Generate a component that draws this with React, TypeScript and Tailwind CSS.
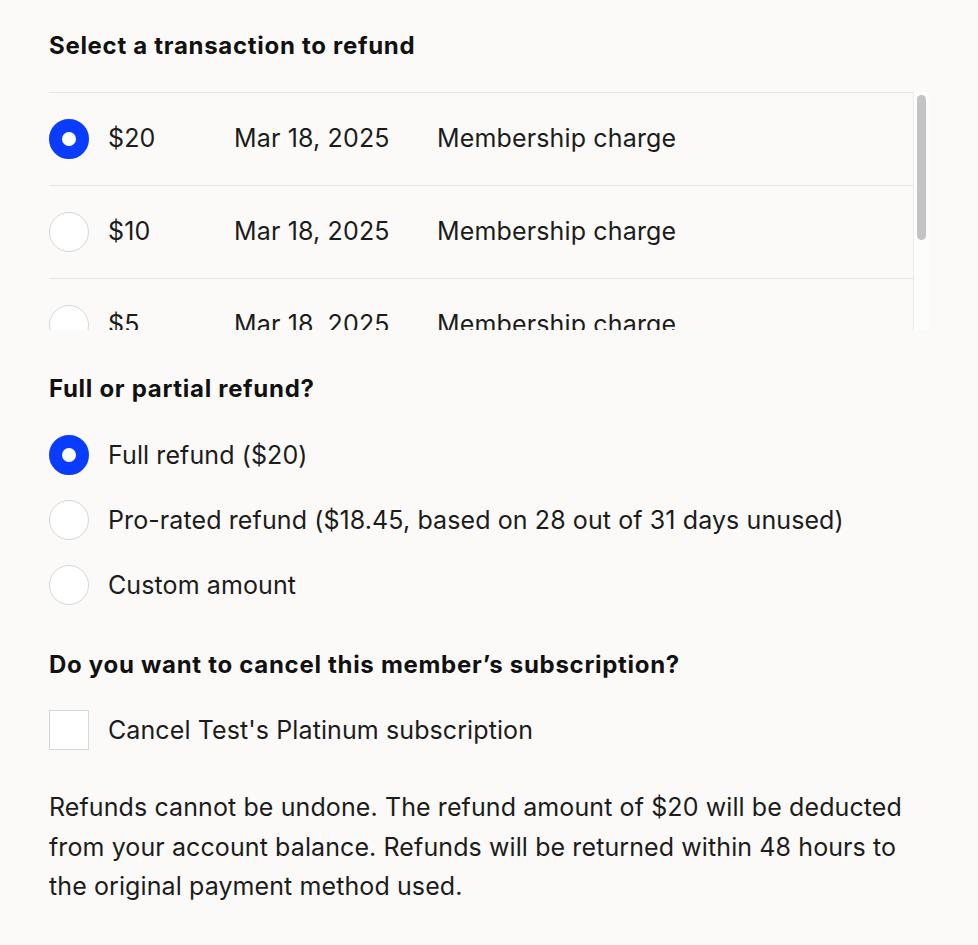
import { useState } from 'react';

type Txn = { id: string; amount: string; date: string; label: string };

const transactions: Txn[] = [
  { id: 't1', amount: '$20', date: 'Mar 18, 2025', label: 'Membership charge' },
  { id: 't2', amount: '$10', date: 'Mar 18, 2025', label: 'Membership charge' },
  { id: 't3', amount: '$5', date: 'Mar 18, 2025', label: 'Membership charge' },
  { id: 't4', amount: '$5', date: 'Feb 18, 2025', label: 'Membership charge' },
];

const refundOptions = [
  { id: 'full', label: 'Full refund ($20)' },
  { id: 'prorated', label: 'Pro-rated refund ($18.45, based on 28 out of 31 days unused)' },
  { id: 'custom', label: 'Custom amount' },
];

function Radio({ checked }: { checked: boolean }) {
  return checked ? (
    <span className="block w-[40px] h-[40px] shrink-0 rounded-full border-[13px] border-[#0a3cff] bg-white" />
  ) : (
    <span className="block w-[40px] h-[40px] shrink-0 rounded-full border border-[#d6d6d4] bg-white" />
  );
}

export default function App() {
  const [txn, setTxn] = useState('t1');
  const [refund, setRefund] = useState('full');
  const [cancel, setCancel] = useState(false);

  return (
    <div
      className="min-h-screen bg-[#fbfaf8] text-[#1c1c1c] pl-[49px] pt-[30px] pb-10"
      style={{ fontFamily: 'Inter, "Noto Sans", sans-serif' }}
    >
      <div className="w-[880px]">
        <h2 className="text-[24px] leading-[32px] font-bold text-[#111] tracking-[0.7px]">
          Select a transaction to refund
        </h2>

        {/* Transaction list with its scrollbar track */}
        <div className="mt-[30px] flex h-[238px]">
          <div className="flex-1 overflow-y-scroll [scrollbar-width:none] [&::-webkit-scrollbar]:hidden">
            <div className="border-t border-[#e6e5e3]">
              {transactions.map((t) => (
                <button
                  key={t.id}
                  onClick={() => setTxn(t.id)}
                  className="flex w-full items-center h-[93px] border-b border-[#e6e5e3] text-left text-[25px] tracking-[0.15px]"
                >
                  <Radio checked={txn === t.id} />
                  <span className="ml-[19px] w-[126px]">{t.amount}</span>
                  <span className="w-[203px]">{t.date}</span>
                  <span>{t.label}</span>
                </button>
              ))}
            </div>
          </div>
          <div className="w-[16px] shrink-0 border-l border-[#ebebea] bg-[#fdfdfc] pt-[3px] pl-[3px]">
            <div className="w-[9px] h-[145px] rounded-full bg-[#c4c4c4]" />
          </div>
        </div>

        <h2 className="mt-[43px] text-[24px] leading-[32px] font-bold text-[#111] tracking-[0.7px]">
          Full or partial refund?
        </h2>
        <div className="mt-[30px] flex flex-col gap-[25px]">
          {refundOptions.map((o) => (
            <button
              key={o.id}
              onClick={() => setRefund(o.id)}
              className="flex items-center text-left text-[25px] leading-[40px] tracking-[0.1px]"
            >
              <Radio checked={refund === o.id} />
              <span className="ml-[19px]">{o.label}</span>
            </button>
          ))}
        </div>

        <h2 className="mt-[44px] text-[24px] leading-[32px] font-bold text-[#111] tracking-[0.7px]">
          Do you want to cancel this member’s subscription?
        </h2>
        <button
          onClick={() => setCancel(!cancel)}
          className="mt-[29px] flex items-center text-left text-[25px] leading-[40px] tracking-[0.1px]"
        >
          <span className="flex items-center justify-center w-[40px] h-[40px] shrink-0 border border-[#d6d6d4] bg-white">
            {cancel && (
              <svg width="22" height="22" viewBox="0 0 24 24" fill="none" stroke="#0a3cff" strokeWidth="3">
                <path d="M5 12l5 5 9-10" />
              </svg>
            )}
          </span>
          <span className="ml-[19px]">Cancel Test's Platinum subscription</span>
        </button>

        <p className="mt-[38px] w-[872px] text-[25px] leading-[39.5px] tracking-[0.1px]">
          Refunds cannot be undone. The refund amount of $20 will be deducted from your account
          balance. Refunds will be returned within 48 hours to the original payment method used.
        </p>
      </div>
    </div>
  );
}
